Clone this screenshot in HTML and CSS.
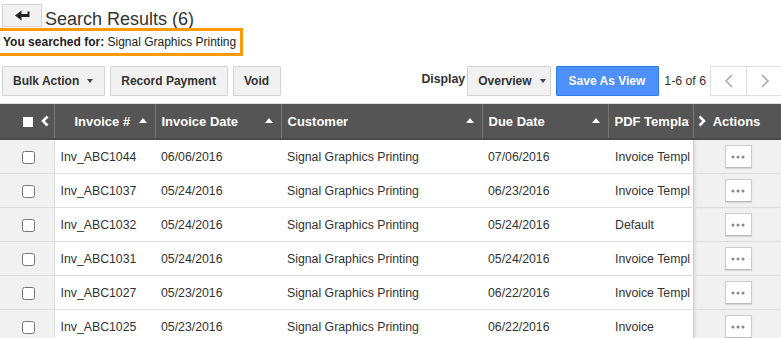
FILE: index.html
```html
<!DOCTYPE html>
<html lang="en">
<head>
  <meta charset="UTF-8" />
  <title>Search Results</title>
  <link rel="stylesheet" href="styles.css">
</head>
<body>

  <!-- Title -->
  <div class="title-row">
    <button class="back-btn" title="Back">
      <svg width="15" height="11" viewBox="0 0 15 11"><path d="M0 5.5 L6.5 0.5 L6.5 4 L12.5 4 L12.5 1.5 L14.5 1.5 L14.5 7 L6.5 7 L6.5 10.5 Z" fill="#222"/></svg>
    </button>
    <h1>Search Results (6)</h1>
  </div>
  <div class="searched"><strong>You searched for:</strong> Signal Graphics Printing</div>

  <!-- Toolbar -->
  <div class="toolbar">
    <div class="toolbar-left">
      <button class="btn btn-bulk">Bulk Action <span class="caret"></span></button>
      <button class="btn">Record Payment</button>
      <button class="btn">Void</button>
    </div>
    <div class="toolbar-right">
      <span class="label">Display</span>
      <button class="btn btn-view">Overview <span class="caret"></span></button>
      <button class="btn btn-blue">Save As View</button>
      <span class="count">1-6 of 6</span>
      <div class="pager">
        <button class="page-btn"><svg width="10" height="14" viewBox="0 0 10 14"><polyline points="8,1 2,7 8,13" fill="none" stroke="#aaa" stroke-width="1.6"/></svg></button>
        <button class="page-btn"><svg width="10" height="14" viewBox="0 0 10 14"><polyline points="2,1 8,7 2,13" fill="none" stroke="#aaa" stroke-width="1.6"/></svg></button>
      </div>
    </div>
  </div>

  <!-- Results table -->
  <div class="grid-wrap">
    <table class="grid">
      <colgroup>
        <col style="width:54px">
        <col style="width:101px">
        <col style="width:126px">
        <col style="width:201px">
        <col style="width:126px">
        <col style="width:85px">
        <col style="width:92px">
      </colgroup>
      <thead>
        <tr>
          <th class="col-check">
            <span class="head-check"></span>
            <svg class="chev" width="8" height="12" viewBox="0 0 8 12"><polyline points="6.5,1.5 2,6 6.5,10.5" fill="none" stroke="#fff" stroke-width="2.6"/></svg>
          </th>
          <th class="col-inv"><div class="th-in">Invoice # <span class="sort"></span></div></th>
          <th><div class="th-in">Invoice Date <span class="sort"></span></div></th>
          <th><div class="th-in">Customer <span class="sort"></span></div></th>
          <th><div class="th-in">Due Date <span class="sort"></span></div></th>
          <th class="col-pdf"><div class="clip">PDF Template</div></th>
          <th class="col-actions">
            <svg class="chev" width="8" height="12" viewBox="0 0 8 12"><polyline points="1.5,1.5 6,6 1.5,10.5" fill="none" stroke="#fff" stroke-width="2.6"/></svg>
            Actions
          </th>
        </tr>
      </thead>
      <tbody>
        <tr>
          <td class="col-check"><input type="checkbox"></td>
          <td>Inv_ABC1044</td><td>06/06/2016</td><td>Signal Graphics Printing</td><td>07/06/2016</td>
          <td class="col-pdf"><div class="clip">Invoice Template</div></td>
          <td class="col-actions"><button class="more"><svg width="14" height="4" viewBox="0 0 14 4"><circle cx="2" cy="2" r="1.5" fill="#888"/><circle cx="7" cy="2" r="1.5" fill="#888"/><circle cx="12" cy="2" r="1.5" fill="#888"/></svg></button></td>
        </tr>
        <tr>
          <td class="col-check"><input type="checkbox"></td>
          <td>Inv_ABC1037</td><td>05/24/2016</td><td>Signal Graphics Printing</td><td>06/23/2016</td>
          <td class="col-pdf"><div class="clip">Invoice Template</div></td>
          <td class="col-actions"><button class="more"><svg width="14" height="4" viewBox="0 0 14 4"><circle cx="2" cy="2" r="1.5" fill="#888"/><circle cx="7" cy="2" r="1.5" fill="#888"/><circle cx="12" cy="2" r="1.5" fill="#888"/></svg></button></td>
        </tr>
        <tr>
          <td class="col-check"><input type="checkbox"></td>
          <td>Inv_ABC1032</td><td>05/24/2016</td><td>Signal Graphics Printing</td><td>05/24/2016</td>
          <td class="col-pdf"><div class="clip">Default</div></td>
          <td class="col-actions"><button class="more"><svg width="14" height="4" viewBox="0 0 14 4"><circle cx="2" cy="2" r="1.5" fill="#888"/><circle cx="7" cy="2" r="1.5" fill="#888"/><circle cx="12" cy="2" r="1.5" fill="#888"/></svg></button></td>
        </tr>
        <tr>
          <td class="col-check"><input type="checkbox"></td>
          <td>Inv_ABC1031</td><td>05/24/2016</td><td>Signal Graphics Printing</td><td>05/24/2016</td>
          <td class="col-pdf"><div class="clip">Invoice Template</div></td>
          <td class="col-actions"><button class="more"><svg width="14" height="4" viewBox="0 0 14 4"><circle cx="2" cy="2" r="1.5" fill="#888"/><circle cx="7" cy="2" r="1.5" fill="#888"/><circle cx="12" cy="2" r="1.5" fill="#888"/></svg></button></td>
        </tr>
        <tr>
          <td class="col-check"><input type="checkbox"></td>
          <td>Inv_ABC1027</td><td>05/23/2016</td><td>Signal Graphics Printing</td><td>06/22/2016</td>
          <td class="col-pdf"><div class="clip">Invoice Template</div></td>
          <td class="col-actions"><button class="more"><svg width="14" height="4" viewBox="0 0 14 4"><circle cx="2" cy="2" r="1.5" fill="#888"/><circle cx="7" cy="2" r="1.5" fill="#888"/><circle cx="12" cy="2" r="1.5" fill="#888"/></svg></button></td>
        </tr>
        <tr>
          <td class="col-check"><input type="checkbox"></td>
          <td>Inv_ABC1025</td><td>05/23/2016</td><td>Signal Graphics Printing</td><td>06/22/2016</td>
          <td class="col-pdf"><div class="clip">Invoice</div></td>
          <td class="col-actions"><button class="more"><svg width="14" height="4" viewBox="0 0 14 4"><circle cx="2" cy="2" r="1.5" fill="#888"/><circle cx="7" cy="2" r="1.5" fill="#888"/><circle cx="12" cy="2" r="1.5" fill="#888"/></svg></button></td>
        </tr>
      </tbody>
    </table>
  </div>

</body>
</html>
```

FILE: styles.css
```css
body {
  font-family: 'Liberation Sans', Arial, sans-serif;
  font-size: 12px;
  color: #333;
  background-color: #fff;
  margin: 0;
  padding: 0;
  overflow: hidden;
}

button {
  font-family: inherit;
  cursor: pointer;
}

/* Title */
.title-row {
  display: flex;
  align-items: flex-end;
  padding: 4px 0 0 2px;
}
.back-btn {
  width: 40px;
  height: 23px;
  padding: 0;
  background-color: #f1f1f1;
  border: 1px solid #d3d3d3;
  display: flex;
  align-items: center;
  justify-content: center;
}
.title-row h1 {
  margin: 0 0 -2px 3px;
  font-size: 18px;
  font-weight: normal;
  line-height: 20px;
  color: #333;
}
.searched {
  display: inline-block;
  margin-top: 1px;
  padding: 4px 4px 3px 0;
  border: 3px solid #f90;
  border-left-width: 0;
  color: #222;
  line-height: 15px;
}
.searched strong {
  padding-left: 3px;
}

/* Toolbar */
.toolbar {
  display: flex;
  justify-content: space-between;
  margin-top: 10px;
  margin-right: -3px;
  padding-left: 2px;
}
.toolbar-left,
.toolbar-right {
  display: flex;
  align-items: center;
  gap: 5px;
}
.btn {
  height: 30px;
  padding: 0 11px 0 10px;
  background-color: #f1f1f1;
  border: 1px solid #d3d3d3;
  border-radius: 1px;
  color: #333;
  font-size: 12px;
  font-weight: bold;
  display: flex;
  align-items: center;
  gap: 8px;
}
.btn-view {
  padding: 0 4px 0 10px;
}
.btn-blue {
  background-color: #4d90fe;
  border-color: #3079ed;
  color: #fff;
  padding: 0 13px 0 12px;
}
.caret {
  width: 0;
  height: 0;
  border-left: 3.5px solid transparent;
  border-right: 3.5px solid transparent;
  border-top: 4px solid #444;
}
.label {
  font-weight: bold;
  font-size: 12.3px;
  margin-top: -5px;
  margin-right: -3px;
}
.count {
  font-size: 12.3px;
  color: #333;
}
.pager {
  display: flex;
  margin-left: -1px;
}
.page-btn {
  width: 37px;
  height: 30px;
  padding: 0;
  background-color: #fff;
  border: 1px solid #ddd;
  display: flex;
  align-items: center;
  justify-content: center;
}
.page-btn + .page-btn {
  border-left: none;
}

/* Table */
.grid-wrap {
  margin-top: 7px;
  border-top: 1px solid #ddd;
  overflow: hidden;
}
.grid {
  width: 785px;
  table-layout: fixed;
  border-collapse: collapse;
}
.grid th {
  height: 34px;
  padding: 0 6px;
  background-color: #555;
  color: #fff;
  font-size: 13px;
  font-weight: bold;
  text-align: left;
  border-right: 1px solid #777;
  border-bottom: 2px solid #4a4a4a;
  white-space: nowrap;
}
.th-in {
  display: flex;
  justify-content: space-between;
  align-items: center;
}
.sort {
  width: 0;
  height: 0;
  border-left: 4px solid transparent;
  border-right: 4px solid transparent;
  border-bottom: 5px solid #fff;
  margin: -2px 2px 0 0;
}
.grid th.col-inv {
  padding-left: 20px;
}
.grid th.col-check {
  padding: 0 0 0 23px;
}
.head-check {
  display: inline-block;
  width: 10px;
  height: 10px;
  background-color: #fff;
  vertical-align: middle;
}
.chev {
  vertical-align: middle;
  margin-top: -2px;
}
.grid th.col-check .chev {
  margin-left: 4px;
}
.grid th.col-actions {
  padding-left: 4px;
  border-left: 1px solid #444;
  border-right: none;
}
.grid th.col-actions .chev {
  margin-right: 4px;
}
.grid td {
  height: 33px;
  padding: 0 6px;
  font-size: 12.3px;
  border-bottom: 1px solid #ddd;
  white-space: nowrap;
  overflow: hidden;
}
.clip {
  overflow: hidden;
  white-space: nowrap;
}
.grid th.col-pdf {
  padding: 0 4px 0 6px;
}
.grid td.col-pdf {
  padding: 0 3px 0 7px;
}
.grid td.col-check {
  background-color: #f1f1f1;
  border-right: 1px solid #ddd;
  text-align: center;
  padding: 0 0 0 4px;
}
.grid td.col-check input {
  width: 13px;
  height: 13px;
  margin: 0;
  vertical-align: middle;
}
.grid td.col-actions {
  background-color: #f1f1f1;
  border-left: 1px solid #ccc;
  box-shadow: inset 2px 0 2px rgba(0, 0, 0, 0.06);
  text-align: center;
  padding: 0 2px 0 0;
}
.more {
  width: 27px;
  height: 23px;
  padding: 0;
  background-color: #fff;
  border: 1px solid #ccc;
  border-bottom-color: #bbb;
  box-shadow: 0 1px 1px rgba(0, 0, 0, 0.1);
  display: inline-flex;
  align-items: center;
  justify-content: center;
  vertical-align: middle;
}
```
